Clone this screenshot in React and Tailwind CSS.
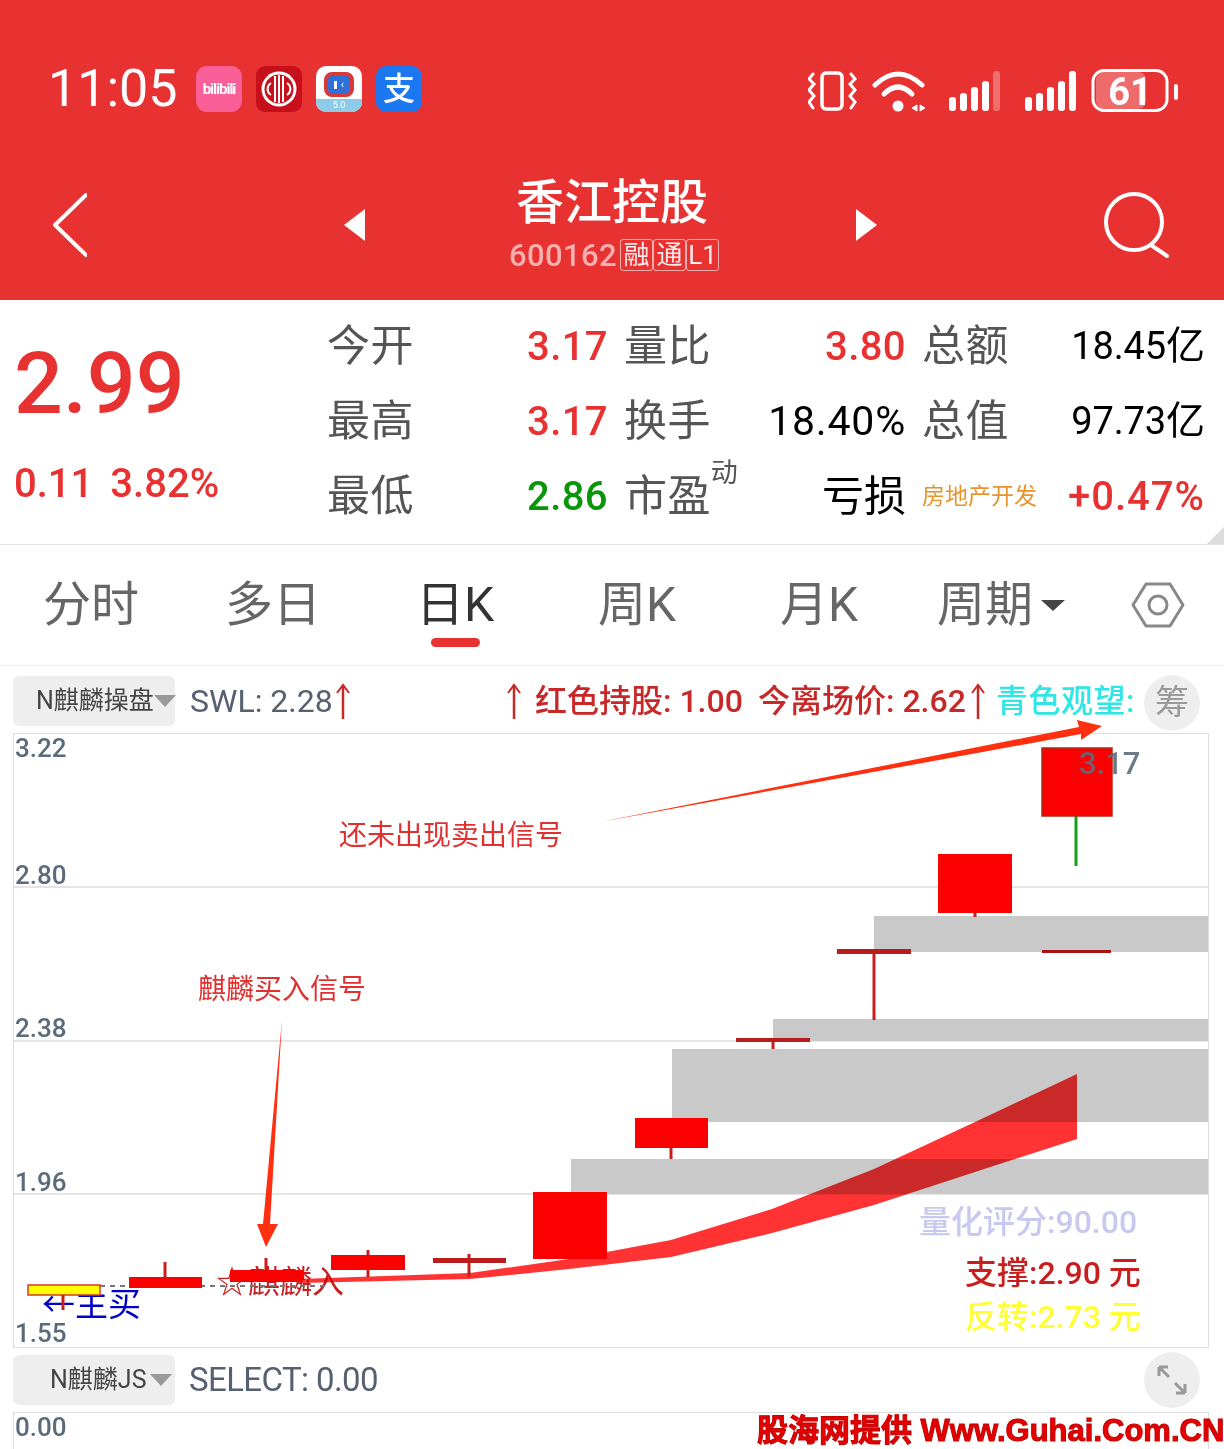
import React from 'react'

const candles = [
  { x: 165, left: 129, w: 73, top: 1277, h: 11, wt: 1262, wb: 1288 },
  { x: 368, left: 331, w: 74, top: 1255, h: 15, wt: 1250, wb: 1277 },
  { x: 469, left: 433, w: 73, top: 1258, h: 5, wt: 1254, wb: 1277, dark: true },
  { x: 570, left: 533, w: 74, top: 1192, h: 67, wt: 1192, wb: 1259 },
  { x: 671, left: 635, w: 73, top: 1118, h: 30, wt: 1118, wb: 1159 },
  { x: 773, left: 736, w: 74, top: 1038, h: 4, wt: 1038, wb: 1049, dark: true },
  { x: 874, left: 837, w: 74, top: 949, h: 5, wt: 949, wb: 1020, dark: true },
  { x: 975, left: 938, w: 74, top: 854, h: 59, wt: 854, wb: 917 },
]

const ribbon = [
  'M300 1279 L470 1273 L569 1259 L671 1240 L671 1257 L569 1269 L470 1279 L300 1283 Z',
  'M671 1240 L772 1209 L772 1233 L671 1257 Z',
  'M772 1209 L874 1169 L874 1205 L772 1233 Z',
  'M874 1169 L975 1122 L975 1172 L874 1205 Z',
  'M975 1122 L1077 1074 L1077 1139 L975 1172 Z',
]

function Bars({ x, faded }) {
  const bars = [[0, 97], [11, 93], [22, 87], [33, 81], [44, 71]]
  return bars.map(([dx, top], i) => (
    <rect key={i} x={x + dx} y={top} width="7" height={111 - top} rx="3" fill="#fff" fillOpacity={faded && i === 4 ? 0.3 : 1} />
  ))
}

function StatusIcons() {
  return (
    <svg width="372" height="50" viewBox="808 66 372 50" className="block" fill="none">
      <rect x="822" y="73" width="20" height="36" rx="4" stroke="#fff" strokeWidth="3.5" />
      <path d="M813 74 L809 79 L814 84 L809 90 L814 96 L809 102 L813 108" stroke="#fff" strokeWidth="3" strokeLinecap="round" />
      <path d="M851 74 L855 79 L850 84 L855 90 L850 96 L855 102 L851 108" stroke="#fff" strokeWidth="3" strokeLinecap="round" />
      <path d="M875 85 Q898 63 922 85" stroke="#fff" strokeWidth="5" strokeLinecap="round" />
      <path d="M884 94 Q898 80 912 94" stroke="#fff" strokeWidth="5" strokeLinecap="round" />
      <circle cx="898" cy="106" r="5.5" fill="#fff" />
      <path d="M917 105 L917 111 L912 108 Z M920 105 L920 111 L925 108 Z" fill="#fff" stroke="#fff" />
      <Bars x={949} faded />
      <Bars x={1025} />
      <rect x="1096" y="72" width="50" height="37" rx="8" fill="#fff" fillOpacity="0.28" />
      <rect x="1093" y="70.5" width="74" height="40" rx="11" stroke="#fff" strokeWidth="3" />
      <rect x="1174" y="84" width="4" height="16" rx="2" fill="#fff" />
      <text x="1130" y="105" textAnchor="middle" fill="#fff" fontSize="38" fontWeight="700">61</text>
    </svg>
  )
}

function AppIcons() {
  return (
    <div className="flex gap-[14px] ml-[20px]">
      <div className="w-[46px] h-[46px] rounded-[11px] bg-[#fb5f97] flex items-center justify-center text-white text-[15px] font-bold tracking-[-1px]">
        bilibili
      </div>
      <div className="w-[46px] h-[46px] rounded-[9px] bg-[#c8101c] flex items-center justify-center">
        <svg width="38" height="38" viewBox="0 0 38 38" fill="none">
          <circle cx="19" cy="19" r="17.5" fill="#fff" />
          <circle cx="19" cy="19" r="14.5" fill="#c8101c" />
          <path d="M15 6 V32 M19 5 V33 M23 6 V32" stroke="#fff" strokeWidth="2" />
          <path d="M11 13 A7 7 0 0 0 11 25 M27 13 A7 7 0 0 1 27 25" stroke="#fff" strokeWidth="2" />
        </svg>
      </div>
      <div className="relative w-[46px] h-[46px] rounded-[10px] bg-white overflow-hidden flex justify-center">
        <div className="mt-[6px] w-[30px] h-[25px] rounded-[8px] border-[4px] border-[#d83a3a] bg-[#2f6fd8] flex items-center justify-center gap-[4px]">
          <span className="w-[3px] h-[8px] bg-white" />
          <span className="text-white text-[11px] leading-none">‹</span>
        </div>
        <div className="absolute bottom-0 left-0 right-0 h-[13px] bg-[#8ecbe8] text-white text-[9px] leading-[13px] text-center">5.0</div>
      </div>
      <div className="w-[46px] h-[46px] rounded-[10px] bg-[#1c78f0] flex items-center justify-center text-white text-[32px] font-medium leading-none">
        支
      </div>
    </div>
  )
}

function Header() {
  return (
    <header className="h-[300px] bg-[#e83232] text-white">
      <div className="flex items-center h-[46px] relative top-[66px] pl-[48px]">
        <span className="text-[52px] leading-none w-[128px] whitespace-nowrap">11:05</span>
        <AppIcons />
        <div className="ml-[386px] pt-[4px]"><StatusIcons /></div>
      </div>
      <div className="flex items-center pt-[129px] h-[100px] box-content">
        <svg width="34" height="64" viewBox="53 193 34 64" className="ml-[53px]" fill="none">
          <path d="M86 195 L55 225 L86 255" stroke="#fff" strokeWidth="4" strokeLinecap="round" strokeLinejoin="round" />
        </svg>
        <svg width="21" height="32" viewBox="0 0 21 32" className="ml-[257px]"><path d="M21 0 V32 L0 16 Z" fill="#fff" /></svg>
        <div className="ml-[145px] w-[208px] flex flex-col items-center relative top-[-1px]">
          <div className="text-[48px] leading-[56px] font-medium relative left-[-2px] whitespace-nowrap">香江控股</div>
          <div className="flex items-center h-[36px] mt-[6px] text-[#f7b0b0]">
            <span className="text-[31px] leading-none tracking-[0.4px] font-medium">600162</span>
            <div className="flex text-white/90 text-[26px] leading-none ml-[3px]">
              <span className="w-[33px] h-[32px] border border-white/60 rounded-[3px] flex items-center justify-center">融</span>
              <span className="w-[33px] h-[32px] border border-white/60 rounded-[3px] flex items-center justify-center">通</span>
              <span className="w-[33px] h-[32px] border border-white/60 rounded-[3px] flex items-center justify-center">L1</span>
            </div>
          </div>
        </div>
        <svg width="21" height="32" viewBox="0 0 21 32" className="ml-[138px]"><path d="M0 0 V32 L21 16 Z" fill="#fff" /></svg>
        <svg width="66" height="66" viewBox="1103 192 66 66" className="ml-[226px]" fill="none">
          <circle cx="1134" cy="222" r="28" stroke="#fff" strokeWidth="4" />
          <path d="M1151 245 L1167 256" stroke="#fff" strokeWidth="4" strokeLinecap="round" />
        </svg>
      </div>
    </header>
  )
}

function StatRow({ children }) {
  return <div className="flex items-center justify-between">{children}</div>
}

function Quote() {
  const label = 'text-[43px] text-[#555] font-normal'
  return (
    <section className="relative h-[245px] flex border-b border-[#e5e5e5]">
      <div className="w-[327px] pl-[14px] pt-[34px]">
        <div className="text-[86px] leading-[100px] text-[#e83232] font-medium">2.99</div>
        <div className="mt-[26px] text-[40px] leading-[48px] text-[#e83232] font-medium flex gap-[17px]">
          <span>0.11</span>
          <span>3.82%</span>
        </div>
      </div>
      <div className="w-[878px] grid grid-cols-[281px_282px_283px] gap-x-[16px] grid-rows-[75px_75px_75px] pt-[9px] text-[40px] leading-none font-medium tracking-[0.4px]">
        <StatRow><span className={label}>今开</span><span className="text-[#e83232]">3.17</span></StatRow>
        <StatRow><span className={label}>量比</span><span className="text-[#e83232]">3.80</span></StatRow>
        <StatRow><span className={label}>总额</span><span className="text-black text-[38px] tracking-[-0.1px] font-normal">18.45<span className="text-[39px]">亿</span></span></StatRow>
        <StatRow><span className={label}>最高</span><span className="text-[#e83232]">3.17</span></StatRow>
        <StatRow><span className={label}>换手</span><span className="text-black text-[41px] tracking-[0.8px] font-normal">18.40%</span></StatRow>
        <StatRow><span className={label}>总值</span><span className="text-black text-[38px] tracking-[-0.1px] font-normal">97.73<span className="text-[39px]">亿</span></span></StatRow>
        <StatRow><span className={label}>最低</span><span className="text-[#0a960a]">2.86</span></StatRow>
        <StatRow>
          <span className={label}>市盈<sup className="text-[27px] align-super">动</sup></span>
          <span className="text-[42px] text-black font-normal tracking-normal">亏损</span>
        </StatRow>
        <StatRow>
          <span className="text-[23px] text-[#e8942a] font-normal tracking-normal">房地产开发</span>
          <span className="text-[#e83232] tracking-[1px]">+0.47%</span>
        </StatRow>
      </div>
      <div className="absolute right-0 bottom-0 w-0 h-0 border-l-[17px] border-l-transparent border-b-[17px] border-b-[#dcdcdc]" />
    </section>
  )
}

function Tabs() {
  const tabs = ['分时', '多日', '日K', '周K', '月K']
  return (
    <nav className="h-[121px] grid grid-cols-[repeat(6,182px)_132px] items-center text-[48px] text-[#666] border-b border-[#eee]">
      {tabs.map((t) => (
        <div key={t} className={`relative text-center ${t === '日K' ? 'text-[#333]' : ''}`}>
          {t}
          {t === '日K' && <span className="absolute left-[67px] top-[69px] w-[49px] h-[9px] rounded-full bg-[#e83232]" />}
        </div>
      ))}
      <div className="flex items-center justify-center gap-[8px]">
        周期
        <span className="w-0 h-0 border-x-[12px] border-x-transparent border-t-[11px] border-t-[#444]" />
      </div>
      <div className="flex justify-center">
        <svg width="54" height="48" viewBox="0 0 54 48" fill="none">
          <path d="M15 3 H39 L52 24 L39 45 H15 L2 24 Z" stroke="#888" strokeWidth="3" strokeLinejoin="round" />
          <circle cx="27" cy="24" r="9" stroke="#888" strokeWidth="3" />
        </svg>
      </div>
    </nav>
  )
}

function Selector({ name, pad }) {
  return (
    <div className={`w-[162px] h-[50px] shrink-0 rounded-[6px] bg-[#eee] flex items-center justify-between text-[25px] text-[#444] ${pad}`}>
      <span className="whitespace-nowrap">{name}</span>
      <span className="w-0 h-0 border-x-[11px] border-x-transparent border-t-[12px] border-t-[#999]" />
    </div>
  )
}

function UpArrow() {
  return (
    <svg width="18" height="36" viewBox="0 0 18 36" className="shrink-0" fill="none" stroke="#c82828">
      <path d="M9 2 V36" strokeWidth="2.5" />
      <path d="M3 10 L9 2 L15 10" strokeWidth="2" />
    </svg>
  )
}

function IndicatorBar() {
  return (
    <div className="h-[67px] flex items-center pl-[13px] pr-[24px] pt-[2px] text-[32px] text-[#566070]">
      <Selector name="N麒麟操盘" pad="pl-[23px] pr-[1px]" />
      <div className="ml-[15px] w-[315px] flex items-center gap-[1px] whitespace-nowrap">
        SWL: 2.28
        <UpArrow />
      </div>
      <div className="flex items-center whitespace-nowrap text-[#c82828] font-medium leading-none">
        <UpArrow />
        <span className="ml-[12px] w-[223px]">红色持股: 1.00</span>
        <span className="w-[211px]">今离场价: 2.62</span>
        <UpArrow />
      </div>
      <span className="ml-[9px] whitespace-nowrap text-[#2ee6e6] font-medium tracking-[0.5px]">青色观望:</span>
      <span className="ml-auto relative top-[2px] shrink-0 w-[56px] h-[56px] rounded-full bg-[#eee] flex items-center justify-center text-[34px] text-[#999]">筹</span>
    </div>
  )
}

function AxisLabel({ top, children }) {
  return <span className="absolute left-[1px] text-[26px] leading-[30px] text-[#5b6b7b] font-medium" style={{ top }}>{children}</span>
}

function ChartNote({ x, y, className, children }) {
  return <span className={`absolute whitespace-nowrap leading-none ${className}`} style={{ left: x - 13, top: y - 733 }}>{children}</span>
}

function Chart() {
  return (
    <div className="relative mx-[13px] w-[1196px] h-[615px] border border-[#ddd]">
      <ChartNote x={41} y={1287} className="text-[33px] text-[#0000c8]">←主买</ChartNote>
      <ChartNote x={215} y={1265} className="text-[32px] text-[#c81e1e]">☆麒麟入</ChartNote>
      <svg width="1196" height="615" viewBox="13 733 1196 615" className="absolute left-[-1px] top-[-1px] overflow-visible" fill="none">
        {[887, 1041, 1194].map((y) => <path key={y} d={`M13 ${y} H1208`} stroke="#ddd" strokeWidth="1.5" />)}
        <rect x="874" y="916" width="334" height="36" fill="#c9c9c9" />
        <rect x="773" y="1019" width="435" height="22" fill="#c9c9c9" />
        <rect x="672" y="1049" width="536" height="73" fill="#c9c9c9" />
        <rect x="571" y="1159" width="637" height="35" fill="#c9c9c9" />

        <path d="M100 1286 H330" stroke="#777" strokeWidth="2" strokeDasharray="5 5" />
        <g className="mix-blend-multiply">
          {ribbon.map((d) => <path key={d} d={d} fill="#ff3333" />)}
        </g>

        <rect x="28" y="1285" width="72" height="10" fill="#ffff00" stroke="#d83a20" strokeWidth="1.5" />
        <path d="M63 1295 V1310" stroke="#c81e1e" strokeWidth="3" />

        {candles.map((c) => (
          <g key={c.x}>
            <path d={`M${c.x} ${c.wt} V${c.wb}`} stroke="#c81e1e" strokeWidth="3" />
            <rect x={c.left} y={c.top} width={c.w} height={c.h} fill={c.dark ? '#b81c1c' : '#fa0000'} />
          </g>
        ))}

        <path d="M266 1258 V1272" stroke="#c81e1e" strokeWidth="3" />
        <rect x="230" y="1270" width="73" height="12" fill="#fa0000" />

        <path d="M1076 816 V866" stroke="#12a312" strokeWidth="3" />
        <rect x="1042" y="748" width="70" height="68" fill="#fa0000" stroke="#b02a10" strokeWidth="1.5" />
        <rect x="1042" y="950" width="69" height="3" fill="#a81414" />

        <path d="M600 822 L1079 727 L1077 720 L1102 726 L1081 740 L1081 734 Z" fill="#ff3010" />
        <path d="M282 1020 L270 1224 L278 1224 L266 1247 L257 1224 L263 1224 Z" fill="#ff3010" />
      </svg>

      <ChartNote x={338} y={821} className="text-[28px] text-[#e03030]">还未出现卖出信号</ChartNote>
      <ChartNote x={197} y={975} className="text-[28px] text-[#e03030]">麒麟买入信号</ChartNote>
      <ChartNote x={1078} y={747} className="text-[31px] font-medium text-[#5b6b7b]/90">3.17</ChartNote>
      <ChartNote x={918} y={1205} className="text-[32px] font-medium text-[#c8c8f0]">量化评分:90.00</ChartNote>
      <ChartNote x={964} y={1256} className="text-[32px] font-medium text-[#c81e1e]">支撑:2.90 元</ChartNote>
      <ChartNote x={964} y={1300} className="text-[32px] font-medium text-[#ffff33]">反转:2.73 元</ChartNote>

      <AxisLabel top={-1}>3.22</AxisLabel>
      <AxisLabel top={126}>2.80</AxisLabel>
      <AxisLabel top={279}>2.38</AxisLabel>
      <AxisLabel top={433}>1.96</AxisLabel>
      <AxisLabel top={584}>1.55</AxisLabel>
    </div>
  )
}

function SubPane() {
  return (
    <>
      <div className="h-[64px] flex items-center pl-[13px] pr-[24px] text-[33px] text-[#566070]">
        <Selector name="N麒麟JS" pad="pl-[37px] pr-[3px]" />
        <span className="ml-[14px] whitespace-nowrap tracking-[-0.6px]">SELECT: 0.00</span>
        <span className="ml-auto w-[56px] h-[56px] rounded-full bg-[#eee] flex items-center justify-center">
          <svg width="32" height="32" viewBox="0 0 32 32" fill="none" stroke="#999" strokeWidth="3">
            <path d="M3 3 L13 13 M3 3 V12 M3 3 H12 M29 29 L19 19 M29 29 V20 M29 29 H20" />
          </svg>
        </span>
      </div>
      <div className="relative mx-[13px] w-[1196px] h-[37px] border-t border-x border-[#ddd] text-[26px] leading-[28px] font-medium text-[#5b6b7b] pl-[1px]">
        0.00
      </div>
    </>
  )
}

export default function App() {
  return (
    <div className="relative w-[1224px] h-[1449px] bg-white overflow-hidden font-[family-name:Roboto,'Noto_Sans_CJK_SC',sans-serif]">
      <Header />
      <Quote />
      <Tabs />
      <IndicatorBar />
      <Chart />
      <SubPane />
      <div className="absolute left-[757px] top-[1412px] whitespace-nowrap text-[31px] leading-[38px] font-bold text-[#e60000] [-webkit-text-stroke:1px_#c00000] font-[family-name:'Liberation_Sans','Noto_Sans_CJK_SC',sans-serif]">
        股海网提供 Www.Guhai.Com.CN
      </div>
    </div>
  )
}
